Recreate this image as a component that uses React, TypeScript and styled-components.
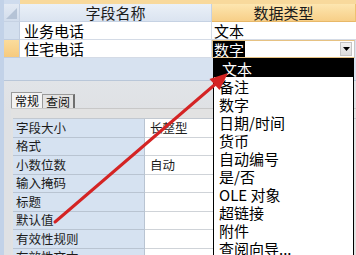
import React from "react";
import styled, { createGlobalStyle } from "styled-components";

const GlobalStyle = createGlobalStyle`
  html, body {
    margin: 0;
    padding: 0;
    overflow: hidden;
    background: #ffffff;
  }
  body {
    font-family: "Noto Sans CJK SC", "Noto Sans", sans-serif;
    color: #000;
  }
`;

interface Field {
  name: string;
  type: string;
}

const fields: Field[] = [
  { name: "业务电话", type: "文本" },
  { name: "住宅电话", type: "数字" },
];

const properties: { label: string; value?: string }[] = [
  { label: "字段大小", value: "长整型" },
  { label: "格式" },
  { label: "小数位数", value: "自动" },
  { label: "输入掩码" },
  { label: "标题" },
  { label: "默认值" },
  { label: "有效性规则" },
  { label: "有效性文本" },
];

const dataTypes = [
  "文本",
  "备注",
  "数字",
  "日期/时间",
  "货币",
  "自动编号",
  "是/否",
  "OLE 对象",
  "超链接",
  "附件",
  "查阅向导...",
];

const App: React.FC = () => {
  return (
    <>
      <GlobalStyle />
      <Page>
        <TopStrip />
        <DesignTable>
          <CornerCell>
            <CornerMark />
          </CornerCell>
          <HeaderCell>字段名称</HeaderCell>
          <HeaderCell $active>数据类型</HeaderCell>
          {fields.map((field, index) => {
            const current = index === fields.length - 1;
            return (
              <React.Fragment key={field.name}>
                <SelectorCell $current={current} />
                <NameCell>{field.name}</NameCell>
                {current ? (
                  <ComboCell>
                    <ComboText>{field.type}</ComboText>
                    <DropButton>
                      <svg width="7" height="4" viewBox="0 0 7 4">
                        <polygon points="0,0 7,0 3.5,4" fill="#000" />
                      </svg>
                    </DropButton>
                  </ComboCell>
                ) : (
                  <TypeCell>{field.type}</TypeCell>
                )}
              </React.Fragment>
            );
          })}
        </DesignTable>
        <EmptyArea />
        <PropsSection>
          <Tabs>
            <Tab $active>常规</Tab>
            <Tab>查阅</Tab>
          </Tabs>
          <TabPanel>
            <PropGrid>
              {properties.map((prop) => (
                <React.Fragment key={prop.label}>
                  <PropLabel>{prop.label}</PropLabel>
                  <PropValue>{prop.value}</PropValue>
                </React.Fragment>
              ))}
            </PropGrid>
          </TabPanel>
        </PropsSection>

        <DropList>
          {dataTypes.map((t, i) => (
            <DropItem key={t} $selected={i === 0}>
              {t}
            </DropItem>
          ))}
        </DropList>

        <ArrowLayer width="356" height="255" viewBox="0 0 356 255">
          <line
            x1="55"
            y1="222"
            x2="219"
            y2="81"
            stroke="#d42424"
            strokeWidth="3"
            strokeLinecap="round"
          />
          <polygon points="228,73 219.5,90 209.5,79" fill="#d42424" />
        </ArrowLayer>
      </Page>
    </>
  );
};

const Page = styled.div`
  position: relative;
  width: 356px;
  height: 255px;
  overflow: hidden;
  box-sizing: border-box;
  border-left: 4px solid #c2d2e8;
  background: #d9e3f0;
  display: flex;
  flex-direction: column;
`;

const TopStrip = styled.div`
  height: 4px;
  flex-shrink: 0;
  background: linear-gradient(to right, #cfdcee 0 16px, #f8d99c 16px);
`;

const DesignTable = styled.div`
  display: grid;
  grid-template-columns: 16px 192px 1fr;
  grid-auto-rows: 18px;
  flex-shrink: 0;
`;

const CornerCell = styled.div`
  position: relative;
  background: linear-gradient(#e3eaf4, #d2ddec);
  border-right: 1px solid #c6d2e3;
  border-bottom: 1px solid #c6d2e3;
  box-sizing: border-box;
`;

const CornerMark = styled.div`
  position: absolute;
  right: 2px;
  bottom: 2px;
  width: 0;
  height: 0;
  border-left: 11px solid transparent;
  border-bottom: 11px solid #b5c3d6;
`;

const HeaderCell = styled.div<{ $active?: boolean }>`
  display: flex;
  align-items: center;
  justify-content: center;
  font-size: 15px;
  line-height: 1;
  color: #1a1a1a;
  box-sizing: border-box;
  border-right: 1px solid ${({ $active }) => ($active ? "#f0c070" : "#c6d2e3")};
  border-bottom: 1px solid ${({ $active }) => ($active ? "#e8b868" : "#c6d2e3")};
  background: ${({ $active }) =>
    $active
      ? "linear-gradient(#fde6b0, #f7cf88)"
      : "linear-gradient(#eaf0f8, #dbe4f0)"};
`;

const SelectorCell = styled.div<{ $current?: boolean }>`
  box-sizing: border-box;
  border-bottom: 1px solid #c0cde0;
  border-right: 1px solid #c0cde0;
  background: ${({ $current }) =>
    $current ? "linear-gradient(#fbdc9c, #f6ca7e)" : "#d3dfee"};
`;

const BodyCell = styled.div`
  display: flex;
  align-items: center;
  padding-left: 3px;
  font-size: 15px;
  line-height: 1;
  background: #fff;
  box-sizing: border-box;
  border-bottom: 1px solid #d4dbe6;
  white-space: nowrap;
`;

const NameCell = styled(BodyCell)`
  padding-left: 4px;
  border-right: 1px solid #d4dbe6;
`;

const TypeCell = styled(BodyCell)`
  padding-left: 2px;
`;

const ComboCell = styled.div`
  display: flex;
  align-items: center;
  justify-content: space-between;
  background: #fff;
  box-sizing: border-box;
  border: 1px solid #e6c283;
  border-right-color: #c8c8c8;
  padding: 0 2px 0 0;
  margin-right: 1px;
`;

const ComboText = styled.span`
  display: flex;
  align-items: center;
  height: 16px;
  padding: 0 1px;
  background: #000;
  color: #fff;
  font-size: 15px;
  line-height: 1;
`;

const DropButton = styled.div`
  display: flex;
  align-items: center;
  justify-content: center;
  width: 12px;
  height: 14px;
  background: linear-gradient(#f2f2f2, #dcdcdc);
  border: 1px solid #c4c4c4;
  box-sizing: border-box;
`;

const EmptyArea = styled.div`
  height: 22px;
  flex-shrink: 0;
  background: #d7e2f0;
  border-bottom: 1px solid #b9c7d9;
`;

const PropsSection = styled.div`
  flex: 1;
  background: linear-gradient(#e1e4e8, #dfe1e4 30px);
  padding: 11px 0 0 7px;
`;

const Tabs = styled.div`
  display: flex;
  align-items: flex-end;
  height: 16px;
`;

const Tab = styled.div<{ $active?: boolean }>`
  display: flex;
  align-items: center;
  justify-content: center;
  box-sizing: border-box;
  height: ${({ $active }) => ($active ? "16px" : "14px")};
  padding: 0 3px;
  font-size: 12px;
  line-height: 1;
  color: #111;
  background: ${({ $active }) => ($active ? "#f3f3f3" : "#e4e4e4")};
  border: 1px solid #9a9a9a;
  border-bottom: none;
  border-right: ${({ $active }) => ($active ? "none" : "2px solid #6f6f6f")};
`;

const TabPanel = styled.div`
  padding: 9px 0 0 2px;
  border-top: 1px solid #c8c8c8;
  background: #e2e2e2;
`;

const PropGrid = styled.div`
  display: grid;
  grid-template-columns: 132px 70px;
  grid-auto-rows: 18.5px;
  border-top: 1px solid #c2c8d0;
`;

const PropLabel = styled.div`
  display: flex;
  align-items: center;
  padding-left: 3px;
  font-size: 12.5px;
  line-height: 1;
  color: #1d1d1d;
  background: #d6e2f1;
  box-sizing: border-box;
  border-bottom: 1px solid #b9c4d2;
  border-right: 1px solid #b9c4d2;
  white-space: nowrap;
`;

const PropValue = styled.div`
  display: flex;
  align-items: center;
  padding-left: 5px;
  font-size: 12.5px;
  line-height: 1;
  color: #1d1d1d;
  background: #fff;
  box-sizing: border-box;
  border-bottom: 1px solid #cfd3d8;
  white-space: nowrap;
`;

const DropList = styled.div`
  position: absolute;
  left: 209px;
  top: 58px;
  width: 141px;
  height: 210px;
  box-sizing: border-box;
  background: #fff;
  border: 1px solid #000;
`;

const DropItem = styled.div<{ $selected?: boolean }>`
  display: flex;
  align-items: center;
  height: 18px;
  padding-left: ${({ $selected }) => ($selected ? "8px" : "5px")};
  font-size: 15px;
  line-height: 1;
  white-space: nowrap;
  background: ${({ $selected }) => ($selected ? "#000" : "transparent")};
  color: ${({ $selected }) => ($selected ? "#fff" : "#000")};
`;

const ArrowLayer = styled.svg`
  position: absolute;
  left: -4px;
  top: 0;
  pointer-events: none;
`;

export default App;
